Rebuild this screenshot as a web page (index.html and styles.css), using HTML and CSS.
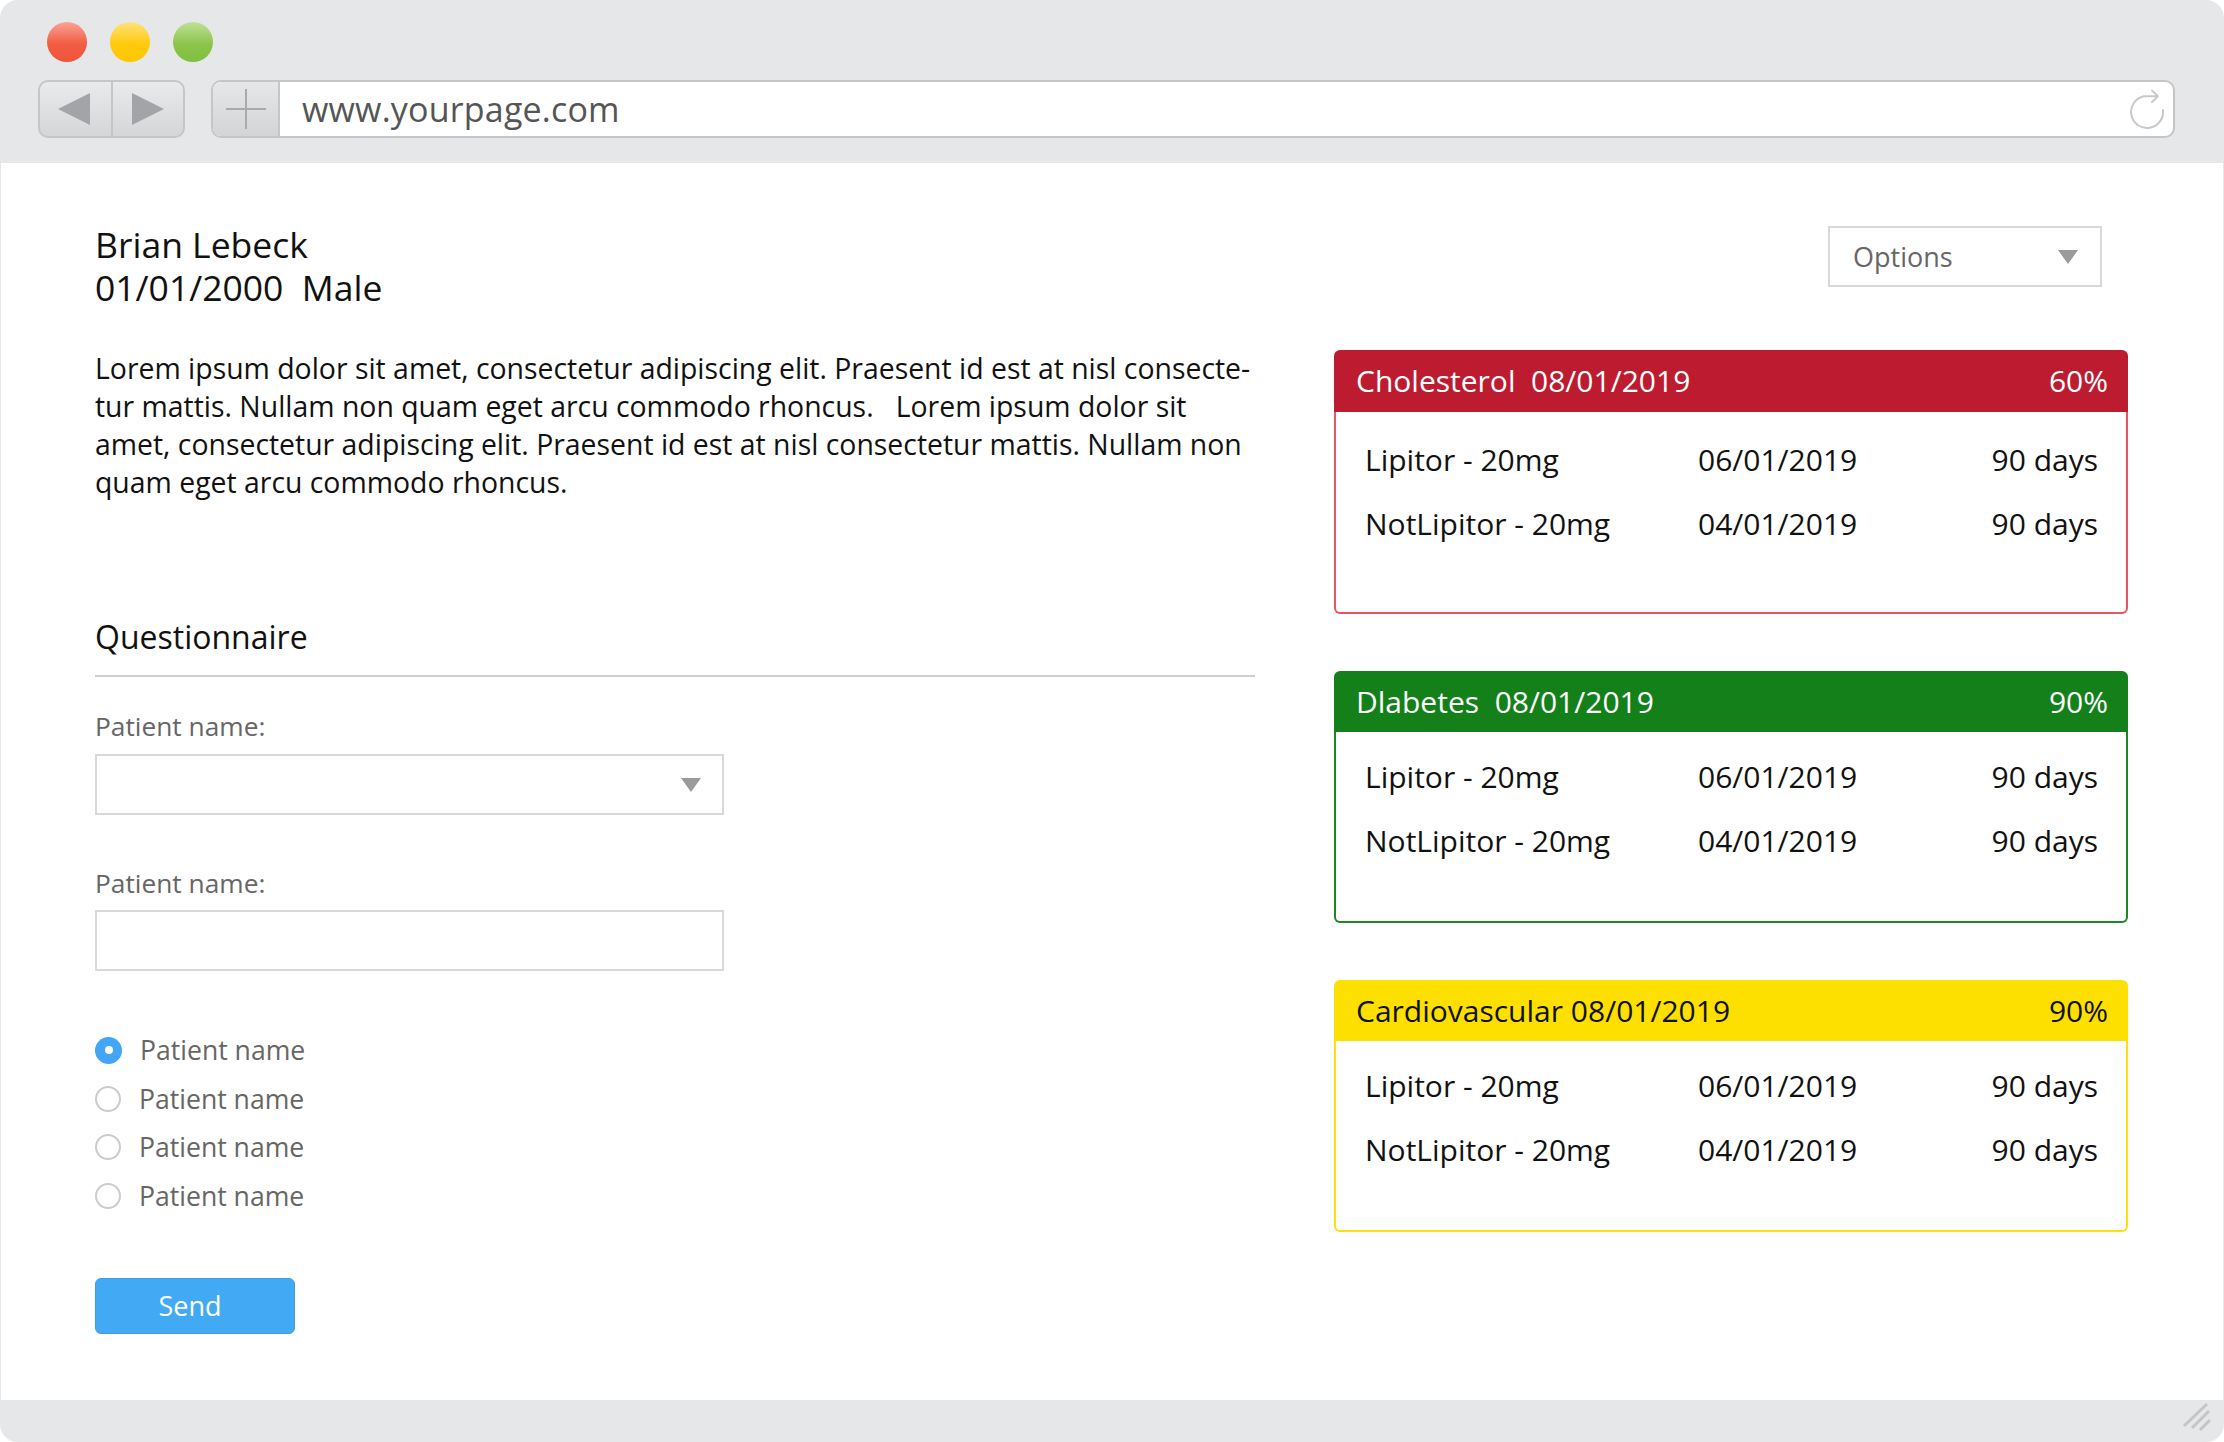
FILE: index.html
```html
<!DOCTYPE html>
<html lang="en">
<head>
<meta charset="utf-8">
<title>Patient overview</title>
<link rel="stylesheet" href="styles.css">
</head>
<body>
<div class="window">
  <header class="chrome">
    <div class="lights">
      <span class="light light--red"></span>
      <span class="light light--yellow"></span>
      <span class="light light--green"></span>
    </div>
    <div class="navrow">
      <div class="navbtns">
        <span class="navbtn">
          <svg width="34" height="34" viewBox="0 0 34 34"><polygon points="0,17 32,1 32,33" fill="#a3a4a8"/></svg>
        </span>
        <span class="navbtn navbtn--fwd">
          <svg width="34" height="34" viewBox="0 0 34 34"><polygon points="33,17 1,1 1,33" fill="#a3a4a8"/></svg>
        </span>
      </div>
      <div class="address">
        <span class="plus">
          <svg width="42" height="42" viewBox="0 0 42 42"><path d="M21 1 V41 M1 21 H41" stroke="#a9aaad" stroke-width="2" fill="none"/></svg>
        </span>
        <span class="url">www.yourpage.com</span>
        <span class="reload">
          <svg width="44" height="44" viewBox="0 0 44 44"><path d="M36 22 A16 16 0 1 1 17 8.3 L30 8.3 M25 2.5 L31 8.3 L25 14" stroke="#c9c9cb" stroke-width="2" fill="none" stroke-linecap="round" stroke-linejoin="round"/></svg>
        </span>
      </div>
    </div>
  </header>

  <main class="page">
    <section class="left">
      <div class="patient">
        <div class="patient__name">Brian Lebeck</div>
        <div class="patient__meta">01/01/2000&nbsp; Male</div>
      </div>
      <p class="intro">Lorem ipsum dolor sit amet, consectetur adipiscing elit. Praesent id est at nisl consecte-<br>tur mattis. Nullam non quam eget arcu commodo rhoncus. &nbsp; Lorem ipsum dolor sit<br>amet, consectetur adipiscing elit. Praesent id est at nisl consectetur mattis. Nullam non<br>quam eget arcu commodo rhoncus.</p>

      <h2 class="section-title">Questionnaire</h2>

      <div class="field">
        <label class="field__label">Patient name:</label>
        <div class="field__box field__box--select">
          <svg width="20" height="14" viewBox="0 0 20 14"><polygon points="0,0 20,0 10,14" fill="#9a9a9a"/></svg>
        </div>
      </div>

      <div class="field field--second">
        <label class="field__label">Patient name:</label>
        <div class="field__box"></div>
      </div>

      <div class="radios">
        <div class="radio"><span class="radio__dot radio__dot--on"></span><span class="radio__label">Patient name</span></div>
        <div class="radio"><span class="radio__dot"></span><span class="radio__label">Patient name</span></div>
        <div class="radio"><span class="radio__dot"></span><span class="radio__label">Patient name</span></div>
        <div class="radio"><span class="radio__dot"></span><span class="radio__label">Patient name</span></div>
      </div>

      <button class="send">Send</button>
    </section>

    <aside class="right">
      <div class="options">
        <span>Options</span>
        <svg width="20" height="14" viewBox="0 0 20 14"><polygon points="0,0 20,0 10,14" fill="#9a9a9a"/></svg>
      </div>

      <div class="card card--red card--tall">
        <div class="card__head"><span>Cholesterol&nbsp; 08/01/2019</span><span>60%</span></div>
        <div class="card__body">
          <span>Lipitor - 20mg</span><span>06/01/2019</span><span class="days">90 days</span>
          <span>NotLipitor - 20mg</span><span>04/01/2019</span><span class="days">90 days</span>
        </div>
      </div>

      <div class="card card--green">
        <div class="card__head"><span>Dlabetes&nbsp; 08/01/2019</span><span>90%</span></div>
        <div class="card__body">
          <span>Lipitor - 20mg</span><span>06/01/2019</span><span class="days">90 days</span>
          <span>NotLipitor - 20mg</span><span>04/01/2019</span><span class="days">90 days</span>
        </div>
      </div>

      <div class="card card--yellow">
        <div class="card__head"><span>Cardiovascular 08/01/2019</span><span>90%</span></div>
        <div class="card__body">
          <span>Lipitor - 20mg</span><span>06/01/2019</span><span class="days">90 days</span>
          <span>NotLipitor - 20mg</span><span>04/01/2019</span><span class="days">90 days</span>
        </div>
      </div>
    </aside>
  </main>

  <footer class="statusbar">
    <svg width="34" height="34" viewBox="0 0 34 34"><path d="M4 26 L27 4 M12 28 L29 11 M20 30 L30 20" stroke="#c4c5c7" stroke-width="3" fill="none"/></svg>
  </footer>
</div>
</body>
</html>
```

FILE: styles.css
```css
* { box-sizing: border-box; }

html, body {
  margin: 0;
  padding: 0;
  background: #ffffff;
}

body {
  font-family: "Open Sans", "Noto Sans", sans-serif;
  color: #111111;
}

.window {
  width: 2224px;
  height: 1442px;
  background: #e6e7e9;
  border-radius: 18px;
  overflow: hidden;
  display: flex;
  flex-direction: column;
}

/* ---------- browser chrome ---------- */
.chrome {
  height: 163px;
  flex: none;
  padding-top: 22px;
}

.lights {
  display: flex;
  gap: 23px;
  margin-left: 47px;
  height: 40px;
}

.light {
  width: 40px;
  height: 40px;
  border-radius: 50%;
}
.light--red { background: linear-gradient(#f7a595, #f35c42 55%, #f0553c); }
.light--yellow { background: linear-gradient(#ffe27e, #ffca0a 55%, #fec700); }
.light--green { background: linear-gradient(#c0e09a, #8cc54a 55%, #7fbf3e); }

.navrow {
  display: flex;
  margin-top: 18px;
  height: 58px;
}

.navbtns {
  margin-left: 38px;
  width: 147px;
  height: 58px;
  display: flex;
  border: 2px solid #c5c6c8;
  border-radius: 10px;
  background: linear-gradient(#e9eaec, #d5d6d8);
  overflow: hidden;
}

.navbtn {
  flex: 1;
  display: flex;
  align-items: center;
  justify-content: center;
}
.navbtn--fwd { border-left: 2px solid #c5c6c8; }

.address {
  margin-left: 26px;
  width: 1964px;
  height: 58px;
  display: flex;
  align-items: center;
  border: 2px solid #c5c6c8;
  border-radius: 10px;
  background: #ffffff;
  overflow: hidden;
}

.plus {
  width: 67px;
  height: 100%;
  flex: none;
  display: flex;
  align-items: center;
  justify-content: center;
  background: linear-gradient(#e6e7e9, #d3d4d6);
  border-right: 2px solid #c5c6c8;
}

.url {
  padding-left: 22px;
  font-size: 34px;
  color: #555555;
  letter-spacing: 0.2px;
}

.reload {
  margin-left: auto;
  margin-right: 2px;
  display: flex;
  margin-top: 2px;
}

/* ---------- page ---------- */
.page {
  flex: 1;
  margin: 0 1px;
  background: #ffffff;
  display: flex;
  gap: 79px;
}

.left {
  width: 1254px;
  padding-left: 94px;
  padding-top: 59px;
  display: flex;
  flex-direction: column;
  align-items: flex-start;
}

.patient__name,
.patient__meta {
  font-size: 35.5px;
  line-height: 44px;
  color: #111;
}
.patient__meta { margin-top: -1px; }

.intro {
  margin: 40px 0 0;
  font-size: 28.4px;
  line-height: 38px;
  white-space: nowrap;
  color: #111;
}

.section-title {
  margin: 116px 0 0;
  width: 1160px;
  font-size: 32px;
  line-height: 40px;
  font-weight: 400;
  color: #111;
  padding-bottom: 18px;
  border-bottom: 2px solid #cfcfcf;
}

.field {
  margin-top: 33px;
  display: flex;
  flex-direction: column;
}
.field--second { margin-top: 52px; }

.field__label {
  font-size: 26.3px;
  line-height: 32px;
  color: #666666;
}

.field__box {
  margin-top: 12px;
  width: 629px;
  height: 61px;
  border: 2px solid #d9d9d9;
  display: flex;
  align-items: center;
  justify-content: flex-end;
  padding-right: 21px;
}
.field--second .field__box { margin-top: 11px; }

.radios {
  margin-top: 55px;
  display: flex;
  flex-direction: column;
}

.radio {
  height: 48.5px;
  display: flex;
  align-items: center;
  gap: 18px;
}

.radio__dot {
  width: 26px;
  height: 26px;
  border-radius: 50%;
  border: 2px solid #cccccc;
  background: #fff;
  display: flex;
  align-items: center;
  justify-content: center;
}
.radio__dot--on {
  border: 0;
  width: 27px;
  height: 27px;
  background: #42a5f5;
}
.radio__dot--on::after {
  content: "";
  width: 8px;
  height: 8px;
  border-radius: 50%;
  background: #ffffff;
}

.radio__label {
  font-size: 26.6px;
  line-height: 48px;
  color: #666666;
}

.send {
  margin-top: 58px;
  width: 200px;
  height: 56px;
  border: 1px solid #3d9ee8;
  border-radius: 6px;
  background: #42a9f4;
  color: #ffffff;
  font-family: "Open Sans", "Noto Sans", sans-serif;
  font-size: 27px;
  padding: 0 10px 2px 0;
}

/* ---------- right column ---------- */
.right {
  width: 794px;
  padding-top: 63px;
  display: flex;
  flex-direction: column;
}

.options {
  align-self: flex-end;
  margin-right: 26px;
  width: 274px;
  height: 61px;
  border: 2px solid #d9d9d9;
  display: flex;
  align-items: center;
  justify-content: space-between;
  padding: 0 22px 0 23px;
  font-size: 27px;
  color: #666666;
}

.card {
  margin-top: 57px;
  display: flex;
  flex-direction: column;
}
.card--tall { margin-top: 63px; }

.card__head {
  height: 61px;
  border-radius: 6px 6px 0 0;
  display: flex;
  justify-content: space-between;
  align-items: center;
  padding: 0 20px 0 22px;
  font-size: 30px;
  line-height: 59px;
  color: #ffffff;
}
.card--tall .card__head {
  height: 62px;
  line-height: 62px;
}

.card__body {
  height: 191px;
  border: 2px solid;
  border-top: 0;
  border-radius: 0 0 6px 6px;
  display: grid;
  grid-template-columns: 333px 1fr auto;
  grid-auto-rows: 64px;
  align-content: start;
  padding: 13px 28px 0 29px;
  font-size: 30px;
  line-height: 64px;
  color: #111111;
}
.card--tall .card__body {
  height: 202px;
  padding-top: 16px;
}

.days { text-align: right; }

.card--red .card__head { background: #bd1c30; }
.card--red .card__body { border-color: #ea5562; }

.card--green .card__head { background: #14801a; }
.card--green .card__body { border-color: #1e8724; }

.card--yellow .card__head { background: #fde000; color: #111111; }
.card--yellow .card__body { border-color: #fbe010; }

/* ---------- bottom bar ---------- */
.statusbar {
  height: 42px;
  flex: none;
  display: flex;
  justify-content: flex-end;
  align-items: flex-end;
  padding: 0 10px 8px 0;
}
```
